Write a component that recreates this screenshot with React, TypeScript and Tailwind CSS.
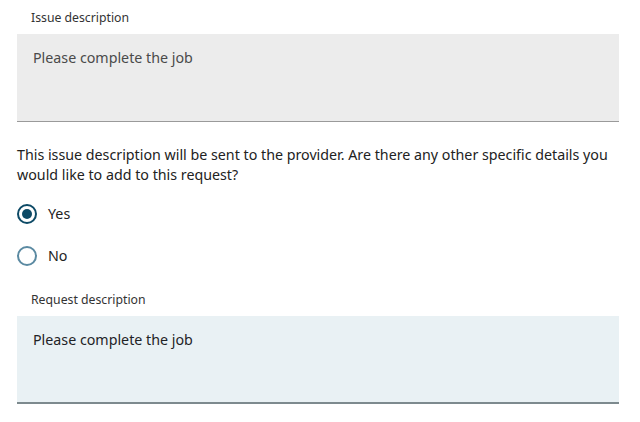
import * as React from "react";

function Field({ label, value, disabled }: { label: string; value: string; disabled?: boolean }) {
    return (
        <div className="flex flex-col">
            <label className="pl-[14px] text-[12.25px] leading-[16px] text-[#333] pb-[8px]">
                {label}
            </label>
            <div
                className={
                    disabled
                        ? "h-[88px] bg-[#ececec] border-b border-[#9a9a9a] px-[16px] pt-[14px] text-[14.25px] leading-[20px] text-[#4a4a4a]"
                        : "h-[88px] bg-[#e9f1f4] border-b-[2px] border-[#7d8a8e] px-[16px] pt-[14px] text-[14.25px] leading-[20px] text-[#1f2326]"
                }
            >
                {value}
            </div>
        </div>
    );
}

function Radio({ label, checked }: { label: string; checked?: boolean }) {
    return (
        <div className="flex items-center gap-[11px] h-[20px]">
            <span
                className={
                    checked
                        ? "w-[20px] h-[20px] rounded-full border-2 border-[#0d4a66] flex items-center justify-center"
                        : "w-[20px] h-[20px] rounded-full border-2 border-[#5b8aa2]"
                }
            >
                {checked && <span className="w-[10px] h-[10px] rounded-full bg-[#0d4a66]" />}
            </span>
            <span className="text-[14.25px] leading-[20px] text-[#222]">{label}</span>
        </div>
    );
}

export default function App() {
    return (
        <div className="w-[640px] h-[422px] bg-white pl-[17px] pr-[21px] pt-[10px]" style={{ fontFamily: '"Noto Sans", sans-serif' }}>
            <Field label="Issue description" value="Please complete the job" disabled />

            <p className="mt-[23px] text-[14.25px] leading-[20px] text-[#222]">
                This issue description will be sent to the provider. Are there any other specific details you would like to add to this request?
            </p>

            <div className="flex flex-col gap-[22px] mt-[19px]">
                <Radio label="Yes" checked />
                <Radio label="No" />
            </div>

            <div className="mt-[26px]">
                <Field label="Request description" value="Please complete the job" />
            </div>
        </div>
    );
}
